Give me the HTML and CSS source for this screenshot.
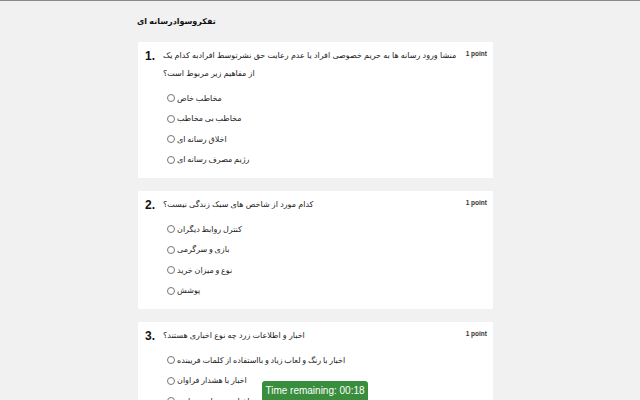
FILE: index.html
```html
<!DOCTYPE html>
<html lang="fa">
<head>
<meta charset="utf-8">
<link rel="stylesheet" href="styles.css">
</head>
<body>
<div class="page">
  <h1 class="title" dir="rtl">تفکروسوادرسانه ای</h1>

  <div class="card">
    <div class="num">1.</div>
    <div class="body">
      <div class="question" dir="rtl">منشا ورود رسانه ها به حریم خصوصی افراد یا عدم رعایت حق نشرتوسط افرادبه کدام یک از مفاهیم زیر مربوط است؟</div>
      <ul class="options">
        <li class="option"><span class="radio"></span><span class="label" dir="rtl">مخاطب خاص</span></li>
        <li class="option"><span class="radio"></span><span class="label" dir="rtl">مخاطب بی مخاطب</span></li>
        <li class="option"><span class="radio"></span><span class="label" dir="rtl">اخلاق رسانه ای</span></li>
        <li class="option"><span class="radio"></span><span class="label" dir="rtl">رژیم مصرف رسانه ای</span></li>
      </ul>
    </div>
    <div class="points">1 point</div>
  </div>

  <div class="card">
    <div class="num">2.</div>
    <div class="body">
      <div class="question" dir="rtl">کدام مورد از شاخص های سبک زندگی نیست؟</div>
      <ul class="options">
        <li class="option"><span class="radio"></span><span class="label" dir="rtl">کنترل روابط دیگران</span></li>
        <li class="option"><span class="radio"></span><span class="label" dir="rtl">بازی و سرگرمی</span></li>
        <li class="option"><span class="radio"></span><span class="label" dir="rtl">نوع و میزان خرید</span></li>
        <li class="option"><span class="radio"></span><span class="label" dir="rtl">پوشش</span></li>
      </ul>
    </div>
    <div class="points">1 point</div>
  </div>

  <div class="card">
    <div class="num">3.</div>
    <div class="body">
      <div class="question" dir="rtl">اخبار و اطلاعات زرد چه نوع اخباری هستند؟</div>
      <ul class="options">
        <li class="option"><span class="radio"></span><span class="label" dir="rtl">اخبار با رنگ و لعاب زیاد و بااستفاده از کلمات فریبنده</span></li>
        <li class="option"><span class="radio"></span><span class="label" dir="rtl">اخبار با هشدار فراوان</span></li>
        <li class="option"><span class="radio"></span><span class="label" dir="rtl">اخبار مربوط به حوادث</span></li>
      </ul>
    </div>
    <div class="points">1 point</div>
  </div>
</div>

<div class="timer">Time remaining: 00:18</div>
</body>
</html>
```

FILE: styles.css
```css
html, body {
  margin: 0;
  padding: 0;
}
body {
  background: #f1f1f1;
  border-top: 1px solid #8a8a8a;
  font-family: "Liberation Sans", "DejaVu Sans", Arial, sans-serif;
  color: #222;
  overflow: hidden;
  height: 399px;
}
.page {
  width: 355px;
  margin-left: 138px;
  padding-top: 14px;
}
.title {
  margin: 0 0 0 -1px;
  font-size: 8px;
  line-height: 14px;
  font-weight: bold;
  text-align: left;
  color: #111;
}
.card {
  background: #fff;
  display: grid;
  grid-template-columns: 18px 1fr auto;
  padding: 5px 6px 8px 7px;
  margin-top: 13px;
}
.num {
  font-size: 12px;
  font-weight: bold;
  line-height: 18px;
  color: #111;
}
.body {
  min-width: 0;
}
.question {
  font-size: 8px;
  word-spacing: 0;
  line-height: 18px;
  text-align: left;
  padding-right: 0;
  color: #222;
}
.options {
  list-style: none;
  margin: 5px 0 0;
  padding: 0 0 0 4px;
}
.option {
  display: flex;
  align-items: center;
  height: 20.5px;
  gap: 2px;
}
.radio {
  width: 6px;
  height: 6px;
  border: 1px solid #777;
  border-radius: 50%;
  flex: none;
}
.label {
  font-size: 8px;
  word-spacing: -0.5px;
  color: #222;
}
.points {
  font-size: 6.5px;
  font-weight: bold;
  line-height: 12px;
  color: #333;
  padding-left: 4px;
  padding-top: 1px;
}
.timer {
  position: fixed;
  left: 262px;
  top: 381px;
  width: 106px;
  height: 24px;
  background: #388e3c;
  color: #fff;
  font-size: 10px;
  line-height: 20px;
  text-align: center;
  white-space: nowrap;
  border-radius: 3px 3px 0 0;
  font-family: "Liberation Sans", Arial, sans-serif;
}
```
